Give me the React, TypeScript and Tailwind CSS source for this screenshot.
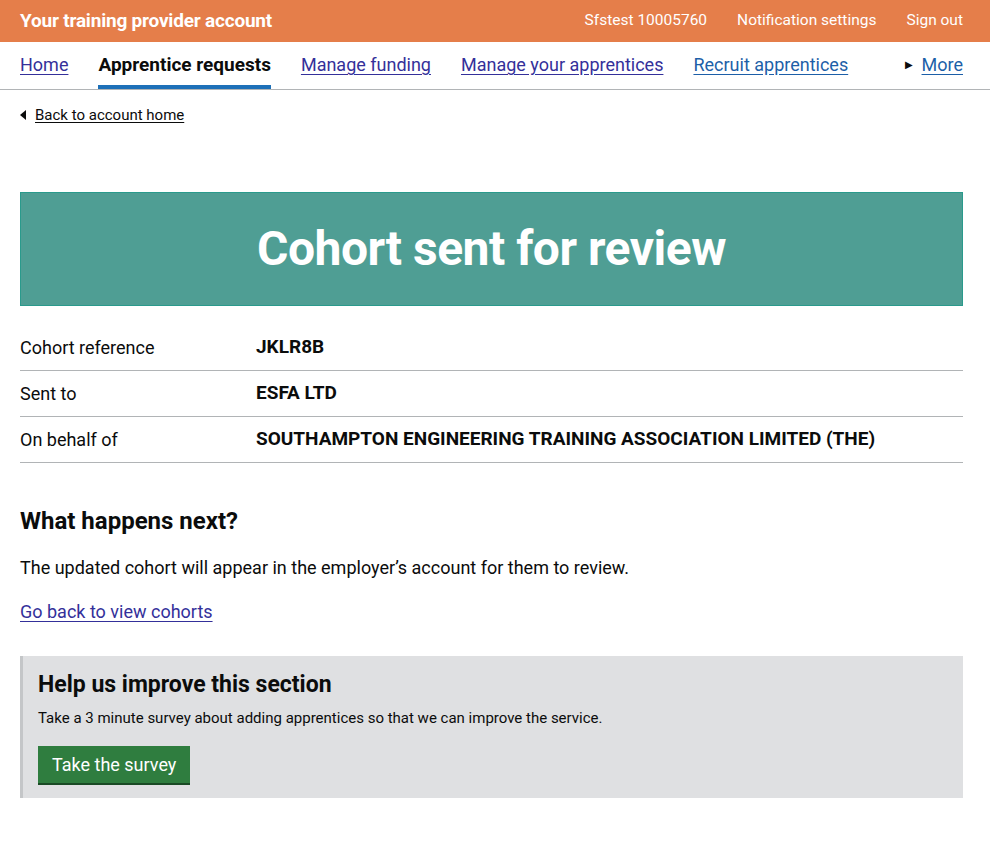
import React from "react";

const font = "font-['Roboto','Liberation_Sans',sans-serif]";

const navItems = [
  { label: "Home", visited: true },
  { label: "Apprentice requests", active: true },
  { label: "Manage funding", visited: true },
  { label: "Manage your apprentices", visited: true },
  { label: "Recruit apprentices" },
];

const rows = [
  ["Cohort reference", "JKLR8B"],
  ["Sent to", "ESFA LTD"],
  ["On behalf of", "SOUTHAMPTON ENGINEERING TRAINING ASSOCIATION LIMITED (THE)"],
];

export default function App() {
  return (
    <div className={`${font} min-h-screen bg-white text-[#0b0c0c]`}>
      <header className="flex h-[42px] items-center justify-between bg-[#e57e4a] pl-5 pr-[27px] text-white">
        <span className="text-[19px] font-bold tracking-[-0.2px]">Your training provider account</span>
        <nav className="flex items-center gap-[30px] text-[15.5px]">
          <a href="#">Sfstest 10005760</a>
          <a href="#">Notification settings</a>
          <a href="#">Sign out</a>
        </nav>
      </header>

      <div className="border-b border-[#b1b4b6] pl-5 pr-[27px]">
        <nav className="flex h-[47px] items-stretch justify-between text-[18px]">
          <div className="flex items-stretch gap-[30px]">
            {navItems.map((item) =>
              item.active ? (
                <span
                  key={item.label}
                  className="flex items-center border-b-4 border-[#1d70b8] pt-1 text-[19px] font-bold text-[#0b0c0c]"
                >
                  {item.label}
                </span>
              ) : (
                <a
                  key={item.label}
                  href="#"
                  className={`flex items-center pb-[2px] underline underline-offset-[3px] ${
                    item.visited ? "text-[#34309a]" : "text-[#1d5fa8]"
                  }`}
                >
                  {item.label}
                </a>
              )
            )}
          </div>
          <div className="flex items-center gap-[9px] pb-[2px]">
            <span className="text-[10px] text-[#0b0c0c]">▶</span>
            <a href="#" className="text-[#1d5fa8] underline underline-offset-[3px]">
              More
            </a>
          </div>
        </nav>
      </div>

      <main className="pl-5 pr-[27px]">
        <a
          href="#"
          className="mt-[15px] inline-flex items-center gap-[9px] text-[15px] leading-[20px] text-[#0b0c0c] underline underline-offset-[2px]"
        >
          <span className="inline-block h-0 w-0 border-y-[5px] border-r-[6px] border-y-transparent border-r-[#0b0c0c]" />
          Back to account home
        </a>

        <div className="mt-[65px] flex h-[114px] items-center justify-center border border-[#2a9a8c] bg-[#4f9e94]">
          <h1 className="text-[48px] font-bold tracking-[-0.5px] text-white">Cohort sent for review</h1>
        </div>

        <dl className="mt-[19px] text-[18px]">
          {rows.map(([k, v]) => (
            <div key={k} className="flex h-[46px] items-center border-b border-[#b1b4b6]">
              <dt className="w-[236px]">{k}</dt>
              <dd className="text-[19px] font-bold">{v}</dd>
            </div>
          ))}
        </dl>

        <h2 className="mt-[43px] text-[24px] font-bold leading-[30px]">What happens next?</h2>
        <p className="mt-[19px] text-[18px] leading-[25px]">
          The updated cohort will appear in the employer’s account for them to review.
        </p>
        <p className="mt-[19px] text-[18px] leading-[25px]">
          <a href="#" className="text-[#34309a] underline underline-offset-[3px]">
            Go back to view cohorts
          </a>
        </p>

        <section className="mt-[32px] border-l-[3px] border-[#c4c6c8] bg-[#dfe0e2] px-[15px] pt-[14px] pb-[15px]">
          <h2 className="text-[23px] font-bold leading-[30px]">Help us improve this section</h2>
          <p className="mt-[8px] text-[15px] leading-[20px]">
            Take a 3 minute survey about adding apprentices so that we can improve the service.
          </p>
          <a
            href="#"
            className="mt-[18px] inline-flex h-[37px] items-center bg-[#2f7d3f] px-[14px] text-[18px] text-white shadow-[0_2px_0_#1a4a25]"
          >
            Take the survey
          </a>
        </section>
      </main>
    </div>
  );
}
